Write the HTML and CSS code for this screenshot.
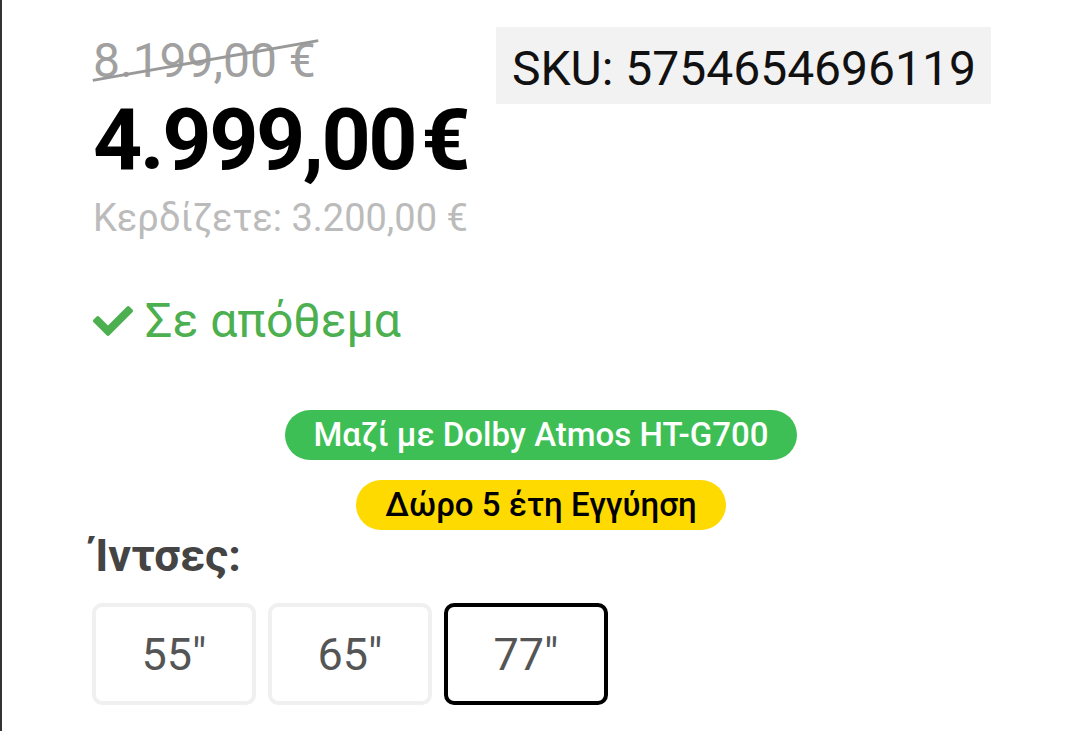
FILE: index.html
```html
<!DOCTYPE html>
<html lang="el">
<head>
  <meta charset="UTF-8">
  <title>Τιμή προϊόντος</title>
  <link rel="stylesheet" href="styles.css">
</head>
<body>
  <div class="page">
    <div class="top">
      <div class="prices">
        <div class="old-price">8.199,00 €</div>
        <div class="price">4.999,00<span class="euro">€</span></div>
        <div class="save">Κερδίζετε: 3.200,00 €</div>
      </div>
      <div class="sku">SKU: 5754654696119</div>
    </div>

    <div class="stock">
      <svg class="check" viewBox="0 64 512 384" width="40" height="30">
        <path fill="#4caf50" d="M173.898 439.404l-166.4-166.4c-9.997-9.997-9.997-26.206 0-36.204l36.203-36.204c9.997-9.998 26.207-9.998 36.204 0L192 312.69 432.095 72.596c9.997-9.997 26.207-9.997 36.204 0l36.203 36.204c9.997 9.997 9.997 26.206 0 36.204l-294.4 294.401c-9.998 9.997-26.207 9.997-36.204-.001z"/>
      </svg>
      <span>Σε απόθεμα</span>
    </div>

    <div class="badges">
      <span class="badge green">Μαζί με Dolby Atmos HT-G700</span>
      <span class="badge yellow">Δώρο 5 έτη Εγγύηση</span>
    </div>

    <div class="sizes">
      <div class="sizes-label">Ίντσες:</div>
      <div class="size-list">
        <div class="size">55"</div>
        <div class="size">65"</div>
        <div class="size active">77"</div>
      </div>
    </div>
  </div>
</body>
</html>
```

FILE: styles.css
```css
body {
  margin: 0;
  background: #fff;
  font-family: Roboto, "Noto Sans", Arial, sans-serif;
}
.page {
  border-left: 2px solid #333;
  min-height: 100vh;
  box-sizing: border-box;
}
.top {
  display: flex;
  align-items: flex-start;
  gap: 28px;
  padding-left: 91px;
}
.prices {
  padding-top: 30px;
}
.old-price {
  position: relative;
  display: inline-block;
  font-size: 48px;
  line-height: 62px;
  color: #a0a0a0;
}
.old-price::after {
  content: "";
  position: absolute;
  left: -2px;
  right: -4px;
  top: 29px;
  height: 3px;
  background: #999;
  transform: rotate(-10deg);
}
.price {
  font-size: 86px;
  line-height: 96px;
  font-weight: 700;
  color: #000;
  letter-spacing: -2.5px;
}
.price .euro {
  margin-left: 6px;
}
.save {
  margin-top: 6px;
  font-size: 38px;
  line-height: 48px;
  color: #bbb;
}
.sku {
  margin-top: 27px;
  padding: 6px 15px 0 16px;
  line-height: 71px;
  font-size: 48px;
  color: #111;
  background: #f2f2f2;
}
.stock {
  display: flex;
  align-items: center;
  gap: 12px;
  margin-top: 49px;
  padding-left: 91px;
  font-size: 48px;
  line-height: 60px;
  color: #4caf50;
}
.badges {
  display: flex;
  flex-direction: column;
  align-items: center;
  gap: 20px;
  margin-top: 59px;
}
.badge {
  height: 50px;
  line-height: 50px;
  padding: 0 29px;
  border-radius: 25px;
  font-size: 33px;
  font-weight: 500;
}
.badge.green {
  background: #3dbf55;
  color: #fff;
}
.badge.yellow {
  background: #ffda00;
  color: #000;
}
.sizes {
  padding-left: 91px;
}
.sizes-label {
  font-size: 45px;
  line-height: 52px;
  font-weight: 700;
  color: #444;
}
.size-list {
  display: flex;
  gap: 12px;
  margin-top: 21px;
  margin-left: -1px;
}
.size {
  width: 164px;
  height: 102px;
  box-sizing: border-box;
  border: 4px solid #f0f0f0;
  border-radius: 10px;
  display: flex;
  align-items: center;
  justify-content: center;
  font-size: 45px;
  color: #555;
}
.size.active {
  border-color: #000;
}
```
